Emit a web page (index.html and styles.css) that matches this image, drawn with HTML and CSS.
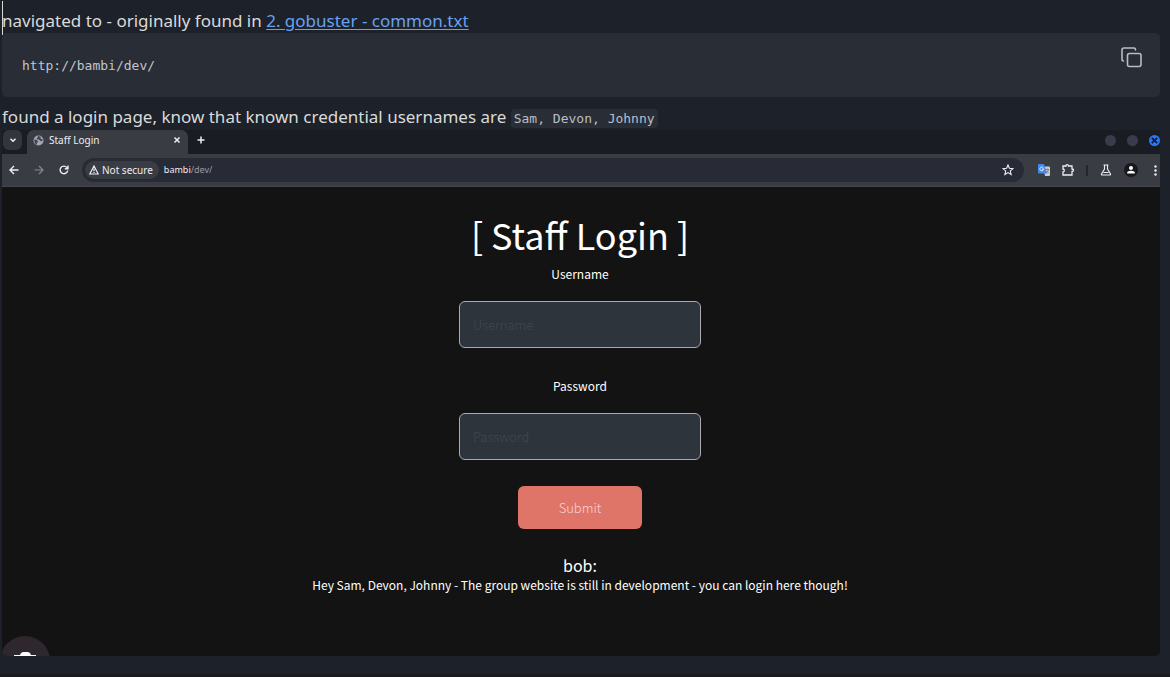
FILE: index.html
```html
<!DOCTYPE html>
<html lang="en">
<head>
<meta charset="utf-8">
<title>Notes</title>
<link rel="stylesheet" href="styles.css">
</head>
<body>
<main class="note">
  <p class="line line-active">navigated to - originally found in <a class="link" href="#gobuster">2. gobuster - common.txt</a></p>
  <div class="code-block">
    <pre class="code"><code>http://bambi/dev/</code></pre>
    <button class="copy" type="button" aria-label="Copy">
      <svg width="24" height="24" viewBox="0 0 24 24" fill="none" stroke="currentColor" stroke-width="1.600" stroke-linecap="round" stroke-linejoin="round"><rect x="8.500" y="8.500" width="13.500" height="13" rx="2"/><path d="M4.500 16c-1.100 0-1.500-.9-1.500-2V5c0-1.100.9-2 2-2h10c1.100 0 1.500.9 1.500 2"/></svg>
    </button>
  </div>
  <p class="line">found a login page, know that known credential usernames are <code class="inline-code">Sam, Devon, Johnny</code></p>

  <section class="browser">
    <header class="tabs">
      <button class="tab-search" type="button" aria-label="Search tabs"><svg width="8" height="8" viewBox="0 0 8 8" fill="none" stroke="currentColor" stroke-width="1.500"><path d="M1.500 2.800 4 5.200l2.500-2.400"/></svg></button>
      <div class="tab">
        <svg width="11" height="11" viewBox="0 0 12 12"><circle cx="6" cy="6" r="5.500" fill="#a3a7b5"/><path d="M1.200 5 4 5.500l1.500 1.300L5.200 8l-1 .5V10.500L2 9zM5.500 1.200 5 2.800l-1.200.7L4.500 5h2l1.500 1.500 2 .2.800-1.700-1.300-.5-1.500-1 .5-1.500z" fill="#42444e"/></svg>
        <span class="tab-title">Staff Login</span>
        <button class="plain" type="button" aria-label="Close tab"><svg width="8" height="8" viewBox="0 0 8 8" stroke="currentColor" stroke-width="1.500"><path d="M1.500 1.500l5 5m0-5-5 5"/></svg></button>
      </div>
      <button class="plain new-tab" type="button" aria-label="New tab"><svg width="8" height="8" viewBox="0 0 8 8" stroke="currentColor" stroke-width="1.500"><path d="M4 .5v7M.5 4h7"/></svg></button>
      <div class="window-buttons">
        <button class="win" type="button" aria-label="Minimize"></button>
        <button class="win" type="button" aria-label="Maximize"></button>
        <button class="win win-close" type="button" aria-label="Close"><svg width="7" height="7" viewBox="0 0 6 6" stroke="#101a38" stroke-width="1.500"><path d="M.7.7l4.600 4.600m0-4.600L.7 5.300"/></svg></button>
      </div>
    </header>
    <nav class="toolbar">
      <button class="plain" type="button" aria-label="Back"><svg width="10" height="10" viewBox="0 0 10 10" fill="none" stroke="currentColor" stroke-width="1.400"><path d="M9.500 5H1.200M5 1 1 5l4 4"/></svg></button>
      <button class="plain dim" type="button" aria-label="Forward"><svg width="10" height="10" viewBox="0 0 10 10" fill="none" stroke="currentColor" stroke-width="1.200"><path d="M.5 5h8.300M5 1l4 4-4 4"/></svg></button>
      <button class="plain" type="button" aria-label="Reload"><svg width="10" height="10" viewBox="0 0 10 10" fill="none" stroke="currentColor" stroke-width="1.400"><path d="M8.700 5.500A3.800 3.800 0 1 1 7.800 2.400L8.800 3.500M9 .5v3.200H5.800"/></svg></button>
      <div class="address">
        <span class="chip"><svg width="10" height="10" viewBox="0 0 10 10" fill="none" stroke="currentColor" stroke-width="1.200"><path d="M5 1 .8 9h8.400zM5 3.800v2.400M5 7v1"/></svg>Not secure</span>
        <span class="url">bambi<span class="url-path">/dev/</span></span>
        <button class="plain star" type="button" aria-label="Bookmark"><svg width="12" height="12" viewBox="0 0 12 12" fill="none" stroke="currentColor" stroke-width="1.100"><path d="m6 1 1.400 3.300 3.600.3-2.700 2.300.8 3.600L6 8.600l-3.100 1.900.8-3.600L1 4.600l3.600-.3z"/></svg></button>
      </div>
      <div class="actions">
        <button class="plain" type="button" aria-label="Translate"><svg width="12" height="12" viewBox="0 0 12 12"><path d="M5 2.500h6q1 0 1 1V11q0 1-1 1H7z" fill="#c9ccd4"/><path d="M7 5.500h4M9 4.500v1m1.500 0C10 7.500 9 8.500 8 9m0-2.500 2.500 2.500" fill="none" stroke="#6b7180" stroke-width=".8"/><path d="M1 0h5l2.800 9.500H1q-1 0-1-1V1q0-1 1-1z" fill="#4286f0"/><path d="M5.300 3.700A1.900 1.900 0 1 0 5.700 5H4" fill="none" stroke="#fff" stroke-width=".9"/></svg></button>
        <button class="plain" type="button" aria-label="Extensions"><svg width="12" height="12" viewBox="0 0 12 12" fill="none" stroke="currentColor" stroke-width="1.300"><path d="M1 2h3q0-1.300 1.200-1.300T6.500 2H10v3q1.500 0 1.500 1.200T10 7.500V11H1V8q1.300 0 1.300-1.500T1 5z"/></svg></button>
        <span class="divider"></span>
        <button class="plain" type="button" aria-label="Labs"><svg width="12" height="12" viewBox="0 0 12 12" fill="none" stroke="currentColor" stroke-width="1.100"><path d="M3.500 1h5M4.500 1v4L1.500 10q-.3 1 .6 1h7.800q.9 0 .6-1l-3-5V1M3.500 8.500h5"/></svg></button>
        <button class="plain" type="button" aria-label="Profile"><svg width="14" height="14" viewBox="0 0 14 14"><circle cx="7" cy="7" r="7" fill="#17181b"/><circle cx="7" cy="5" r="2" fill="#fff"/><path d="M3.200 10.500V9.600Q3.500 7.700 7 7.700t3.800 1.900v.9z" fill="#fff"/></svg></button>
        <button class="plain menu" type="button" aria-label="Menu"><svg width="3" height="11" viewBox="0 0 3 11" fill="currentColor"><circle cx="1.500" cy="1.500" r="1.200"/><circle cx="1.500" cy="5.500" r="1.200"/><circle cx="1.500" cy="9.500" r="1.200"/></svg></button>
      </div>
    </nav>
    <div class="page">
      <h1 class="title">[ Staff Login ]</h1>
      <form class="form">
        <label class="label" for="username">Username</label>
        <input class="field" id="username" type="text" placeholder="Username">
        <label class="label" for="password">Password</label>
        <input class="field" id="password" type="password" placeholder="Password">
        <button class="submit" type="button">Submit</button>
      </form>
      <h2 class="author">bob:</h2>
      <p class="message">Hey Sam, Devon, Johnny - The group website is still in development - you can login here though!</p>
      <svg class="camera" width="48" height="20" viewBox="0 0 48 20"><circle cx="23" cy="25" r="25" fill="#2e282e"/><path d="M12 20v-1h6l1-2 2-1h5l2 1 1 2h5v1z" fill="#fff"/></svg>
    </div>
  </section>
</main>
</body>
</html>
```
FILE: styles.css
```css
* { box-sizing: border-box; }
body {
  margin: 0;
  min-height: 100vh;
  background: #1d2129;
  color: #dadada;
  font: 17px/26px "Noto Sans", sans-serif;
  border-bottom: 3px solid #191a20;
}
button { font: inherit; color: inherit; border: 0; padding: 0; cursor: pointer; }
svg { display: block; }
.note { padding: 0 10px 18px 2px; }
.line { margin: 0; padding-top: 7px; }
.line-active { position: relative; padding-top: 8px; line-height: 25px; }
.line-active::before {
  content: "";
  position: absolute;
  left: 0;
  top: 1px;
  width: 1px;
  height: 34px;
  background: #dadada;
}
.link { color: #68a1f1; text-underline-offset: 2px; }
.code-block {
  display: flex;
  justify-content: space-between;
  align-items: flex-start;
  padding: 12px 17px 12px 20px;
  border-radius: 5px;
  background: #292d35;
}
.code { margin: 0; padding: 9px 0 7px; color: #c0c6d0; font: 13px/24px "DejaVu Sans Mono", monospace; }
.code code { font: inherit; }
.copy { background: none; color: #b8bcc6; }
.inline-code {
  padding: 2px 3px;
  border-radius: 4px;
  background: #292d35;
  color: #b9bec8;
  font: 13px/16px "DejaVu Sans Mono", monospace;
}
.browser { overflow: hidden; border-radius: 0 0 5px 5px; color: #eceef2; font-size: 10px; line-height: 14px; }
.plain { display: flex; background: none; }
.tabs { display: flex; align-items: center; height: 24px; background: #1a1c23; }
.tab-search {
  display: grid;
  place-items: center;
  width: 19px;
  height: 20px;
  margin: 0 5px 4px 1px;
  border-radius: 6px;
  background: #33353d;
}
.tab {
  display: flex;
  align-items: center;
  gap: 5px;
  width: 161px;
  height: 24px;
  padding: 0 7px 4px 6px;
  border-radius: 7px 7px 0 0;
  background: #3a3c44;
}
.tab-title { flex: 1; }
.new-tab { margin: 0 0 4px 9px; }
.window-buttons { display: flex; gap: 11px; margin: 0 0 4px auto; }
.win { display: grid; place-items: center; width: 11px; height: 11px; border-radius: 50%; background: #3b3c4b; }
.win-close { background: #2b78f5; }
.toolbar { display: flex; align-items: center; gap: 15px; height: 33px; padding: 0 3px 0 7px; border-bottom: 1px solid #44464d; background: #3a3c44; }
.dim { color: #858790; }
.address { flex: 1; display: flex; align-items: center; height: 24px; margin-left: -2px; padding: 0 10px 0 3px; border-radius: 12px; background: #282a36; }
.chip { display: flex; align-items: center; gap: 3px; height: 18px; padding: 0 6px 0 4px; border-radius: 9px; background: #3a3c44; }
.url { margin-left: 5px; font-size: 9px; }
.url-path { color: #9a9ca8; }
.star { margin-left: auto; }
.actions { display: flex; align-items: center; gap: 12px; margin-left: -1px; }
.divider { width: 2px; height: 11px; background: #25262c; }
.menu { margin-left: 4px; }
.page {
  position: relative;
  display: flex;
  flex-direction: column;
  align-items: center;
  padding: 19px 2px 61px 0;
  background: #131313;
  color: #fff;
  font: 12px/20px "Noto Sans CJK SC", sans-serif;
}
.title { margin: 0; font-size: 36px; line-height: 56px; font-weight: 400; }
.form { display: flex; flex-direction: column; align-items: center; }
.label { margin: 2px 0 17px; }
.field {
  width: 242px;
  height: 47px;
  margin-bottom: 26px;
  padding: 0 13px;
  border: 1px solid #a8abaf;
  border-radius: 6px;
  background: #2d343c;
  color: #fff;
  font: inherit;
  font-size: 13px;
}
.field::placeholder { color: #44474b; opacity: 1; font-weight: 300; }
.submit { width: 124px; height: 43px; border-radius: 6px; background: #df7468; color: #f8d5d1; font-size: 13px; font-weight: 300; }
.author { margin: 26px 0 0; font-size: 16px; line-height: 20px; font-weight: 400; }
.message { margin: 0; }
.camera { position: absolute; left: 0; bottom: 0; }
```
